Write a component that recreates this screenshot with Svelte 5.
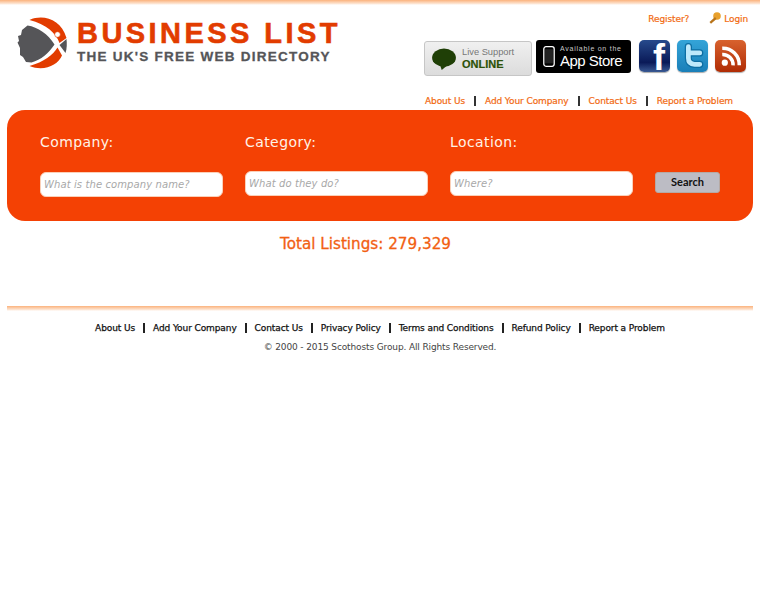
<script lang="ts">
	const topLinks = ['About Us', 'Add Your Company', 'Contact Us', 'Report a Problem'];
	const footerLinks = ['About Us', 'Add Your Company', 'Contact Us', 'Privacy Policy', 'Terms and Conditions', 'Refund Policy', 'Report a Problem'];
	const fields = [
		{ label: 'Company:', hint: 'What is the company name?' },
		{ label: 'Category:', hint: 'What do they do?' },
		{ label: 'Location:', hint: 'Where?' },
	];
</script>

<div class="page">
	<div class="top-bar"></div>

	<header class="header">
		<a class="logo" href="#home">
			<svg class="logo-mark" viewBox="0 0 52 52" width="52" height="52" aria-hidden="true">
				<path d="M13.5 3 C27 -3 45 2 50.5 21 L43.5 26 C40 16 30 7 13.5 3Z" fill="#e23c00" />
				<path d="M13.5 49 C28 55 42 48 46 38.5 L41.5 30.5 C37 38 28 45 13.5 49Z" fill="#e23c00" />
				<path d="M1.5 25.5 L3 24 L2 19 L5 18 L6 13 L11.5 8.5 C22 10 32 17 38.5 27.5 C33 36 25 43 15.5 45.5 L10 45 L7 40 L4 38 L4 31Z" fill="#555558" />
				<path d="M43.5 28 L50.5 22 C51 27 51 31 49.5 36Z" fill="#555558" />
				<circle cx="41.5" cy="17.5" r="2.8" fill="#fff" stroke="#e23c00" stroke-width="0.6" />
			</svg>
			<div class="logo-text">
				<div class="logo-title">BUSINESS LIST</div>
				<div class="logo-sub">THE UK'S FREE WEB DIRECTORY</div>
			</div>
		</a>

		<div class="header-right">
			<div class="account">
				<a href="#register">Register?</a>
				<a class="login" href="#login">
					<svg viewBox="0 0 12 12" width="12" height="12" aria-hidden="true">
						<circle cx="8" cy="4" r="3.8" fill="#e8a02c" />
						<path d="M6 5 L0.5 10 L2 11.8 L7.5 7Z" fill="#b8741a" />
					</svg>
					Login
				</a>
			</div>

			<div class="badges">
				<div class="support">
					<svg viewBox="0 0 27 24" width="26" height="22" aria-hidden="true">
						<ellipse cx="13.5" cy="10.5" rx="13" ry="10" fill="#1f3f06" />
						<path d="M9 18 L11 24 L17 19Z" fill="#1f3f06" />
					</svg>
					<div class="support-text">
						<span>Live Support</span>
						<strong>ONLINE</strong>
					</div>
				</div>

				<div class="appstore">
					<svg viewBox="0 0 13 23" width="12" height="21" aria-hidden="true">
						<rect x="0.8" y="0.8" width="11.4" height="21.4" rx="2.4" fill="#000" stroke="#fff" stroke-width="1.4" />
						<rect x="2.2" y="3.5" width="8.6" height="15.5" fill="#222" />
					</svg>
					<div class="appstore-text">
						<span>Available on the</span>
						<strong>App Store</strong>
					</div>
				</div>

				<div class="social">
					<div class="tile fb">f</div>
					<div class="tile tw">
						<svg viewBox="0 0 30 30" width="31" height="32" aria-hidden="true">
							<path d="M11 6 V17 C11 21 13 23 17 23 H22 M11 12 H22" fill="none" stroke="#0d6ea3" stroke-width="7" stroke-linecap="round" />
							<path d="M11 6 V17 C11 21 13 23 17 23 H22 M11 12 H22" fill="none" stroke="#bfe9fb" stroke-width="4.6" stroke-linecap="round" />
						</svg>
					</div>
					<div class="tile rss">
						<svg viewBox="0 0 30 30" width="31" height="32" aria-hidden="true">
							<circle cx="9.5" cy="21.5" r="3" fill="#fff" />
							<path d="M7 13.5 A10 10 0 0 1 17.5 24" fill="none" stroke="#fff" stroke-width="3.4" />
							<path d="M7 7.5 A16 16 0 0 1 23.5 24" fill="none" stroke="#fff" stroke-width="3.4" />
						</svg>
					</div>
				</div>
			</div>

			<nav class="top-nav">
				{#each topLinks as link}
					<a href="#link">{link}</a>
				{/each}
			</nav>
		</div>
	</header>

	<form class="search">
		{#each fields as field, i}
			<div class="field" class:first={i === 0}>
				<label for="f{i}">{field.label}</label>
				<input id="f{i}" type="text" placeholder={field.hint} />
			</div>
		{/each}
		<button type="button">Search</button>
	</form>

	<p class="total">Total Listings: 279,329</p>

	<div class="rule"></div>

	<footer class="footer">
		<nav class="foot-nav">
			{#each footerLinks as link}
				<a href="#link">{link}</a>
			{/each}
		</nav>
		<p class="copy">© 2000 - 2015 Scothosts Group. All Rights Reserved.</p>
	</footer>
</div>

<style>
	:global(body) {
		background: #fff;
	}

	.page {
		width: 760px;
		font-family: 'DejaVu Sans', Verdana, sans-serif;
		font-size: 9px;
	}

	a {
		text-decoration: none;
		color: inherit;
	}

	.top-bar {
		height: 5px;
		background: linear-gradient(#fbb27c, #fde3cf 70%, #fff);
	}

	/* header */
	.header {
		display: flex;
		justify-content: space-between;
		height: 105px;
		padding: 0 12px 0 16px;
	}

	.logo {
		display: flex;
		align-items: flex-start;
		gap: 9px;
		padding-top: 12px;
	}

	.logo-title {
		font-family: 'Liberation Sans', Arial, sans-serif;
		font-size: 29px;
		font-weight: 700;
		line-height: 32px;
		letter-spacing: 3.45px;
		color: #e23c00;
		-webkit-text-stroke: 0.6px #e23c00;
		white-space: nowrap;
	}

	.logo-sub {
		font-family: 'Liberation Sans', Arial, sans-serif;
		font-size: 13.5px;
		font-weight: 700;
		line-height: 15px;
		letter-spacing: 1.25px;
		color: #555558;
		-webkit-text-stroke: 0.3px #555558;
		white-space: nowrap;
	}

	.header-right {
		display: flex;
		flex-direction: column;
		align-items: flex-end;
	}

	.account {
		display: flex;
		gap: 20px;
		height: 35px;
		padding-top: 8px;
		box-sizing: border-box;
		color: #f26a12;
		line-height: 12px;
		letter-spacing: -0.1px;
		-webkit-text-stroke: 0.2px #f26a12;
	}

	.login {
		display: flex;
		align-items: flex-start;
		gap: 3px;
		margin-top: -1px;
		line-height: 14px;
	}

	.badges {
		display: flex;
		align-items: flex-start;
		gap: 4px;
		height: 56px;
		padding-right: 2px;
	}

	.support {
		display: flex;
		align-items: center;
		gap: 5px;
		box-sizing: border-box;
		width: 108px;
		height: 35px;
		margin-top: 1px;
		padding: 0 0 0 6px;
		border: 1px solid #c6c6c6;
		border-radius: 3px;
		background: linear-gradient(#f0f0f0, #dcdcdc);
		font-family: 'Liberation Sans', Arial, sans-serif;
	}

	.support-text,
	.appstore-text {
		display: flex;
		flex-direction: column;
	}

	.support-text span {
		font-size: 9.3px;
		line-height: 11px;
		color: #777;
		white-space: nowrap;
	}

	.support-text strong {
		font-size: 11px;
		line-height: 12px;
		color: #2c5208;
		-webkit-text-stroke: 0.2px #2c5208;
	}

	.appstore {
		display: flex;
		align-items: center;
		gap: 5px;
		box-sizing: border-box;
		width: 95px;
		height: 33px;
		padding-left: 7px;
		border-radius: 3px;
		background: #000;
		color: #fff;
		font-family: 'Liberation Sans', Arial, sans-serif;
	}

	.appstore-text span {
		font-size: 7px;
		line-height: 8px;
		letter-spacing: 0.75px;
		color: #c8c8c8;
		white-space: nowrap;
	}

	.appstore-text strong {
		font-size: 15px;
		font-weight: 400;
		line-height: 15px;
		letter-spacing: -0.5px;
		white-space: nowrap;
	}

	.social {
		display: flex;
		gap: 7px;
		margin-left: 4px;
	}

	.tile {
		width: 31px;
		height: 32px;
		border-radius: 5px;
		overflow: hidden;
		box-shadow: 0 1px 1px #aaa;
	}

	.fb {
		box-sizing: border-box;
		overflow: visible;
		padding: 3px 5px 0 0;
		background: linear-gradient(#274a8c, #0a1a58 70%, #3a5a94);
		color: #fff;
		font-family: 'Liberation Sans', Arial, sans-serif;
		font-size: 36px;
		font-weight: 700;
		line-height: 29px;
		text-align: right;
	}

	.tw {
		background: linear-gradient(#34a4d8, #1a7fb8);
	}

	.rss {
		background: linear-gradient(#d8622e, #b02c04);
	}

	.top-nav {
		display: flex;
		padding-right: 15px;
		line-height: 10px;
		letter-spacing: -0.1px;
		color: #f26a12;
		-webkit-text-stroke: 0.2px #f26a12;
	}

	.top-nav a + a {
		margin-left: 9px;
		padding-left: 9px;
		border-left: 2px solid #333;
	}

	/* search panel */
	.search {
		display: flex;
		position: relative;
		box-sizing: border-box;
		height: 111px;
		margin: 0 7px;
		padding: 23px 0 0 33px;
		border-radius: 18px;
		background: #f44104;
	}

	.field {
		display: flex;
		flex-direction: column;
		width: 205px;
	}

	.field label {
		height: 38px;
		font-size: 14px;
		line-height: 18px;
		letter-spacing: 0.42px;
		color: #fff3e8;
	}

	.field.first input {
		margin-top: 1px;
	}

	.field input {
		box-sizing: border-box;
		width: 183px;
		height: 25px;
		padding: 0 3px;
		border: 1px solid #fbd0b8;
		border-radius: 6px;
		background: #fff;
		font-family: inherit;
		font-size: 10px;
		font-style: italic;
		letter-spacing: 0.1px;
		outline: none;
	}

	.field input::placeholder {
		color: #a8a8a8;
	}

	button {
		align-self: flex-start;
		box-sizing: border-box;
		width: 65px;
		height: 21px;
		margin: 39px 0 0 0;
		border: 1px solid #b5a9a4;
		border-radius: 3px;
		background: #bcbcc4;
		color: #111;
		font-family: Lato, Tahoma, sans-serif;
		font-size: 11px;
		font-weight: 700;
		line-height: 16px;
		padding: 0 0 2px;
	}

	.total {
		margin: 13px 0 0;
		padding-right: 29px;
		font-size: 15.2px;
		line-height: 20px;
		text-align: center;
		color: #f26012;
		-webkit-text-stroke: 0.3px #f26012;
	}

	.rule {
		height: 5px;
		margin: 52px 7px 0;
		background: linear-gradient(#fbb27c, #fde3cf 70%, #fff);
	}

	.foot-nav {
		display: flex;
		justify-content: center;
		margin-top: 12px;
		line-height: 10px;
		letter-spacing: -0.1px;
		color: #111;
		-webkit-text-stroke: 0.25px #111;
	}

	.foot-nav a + a {
		margin-left: 8px;
		padding-left: 8px;
		border-left: 2px solid #222;
	}

	.copy {
		margin: 8px 0 0;
		font-size: 9px;
		letter-spacing: -0.13px;
		line-height: 12px;
		text-align: center;
		color: #444;
		-webkit-text-stroke: 0;
	}
</style>
